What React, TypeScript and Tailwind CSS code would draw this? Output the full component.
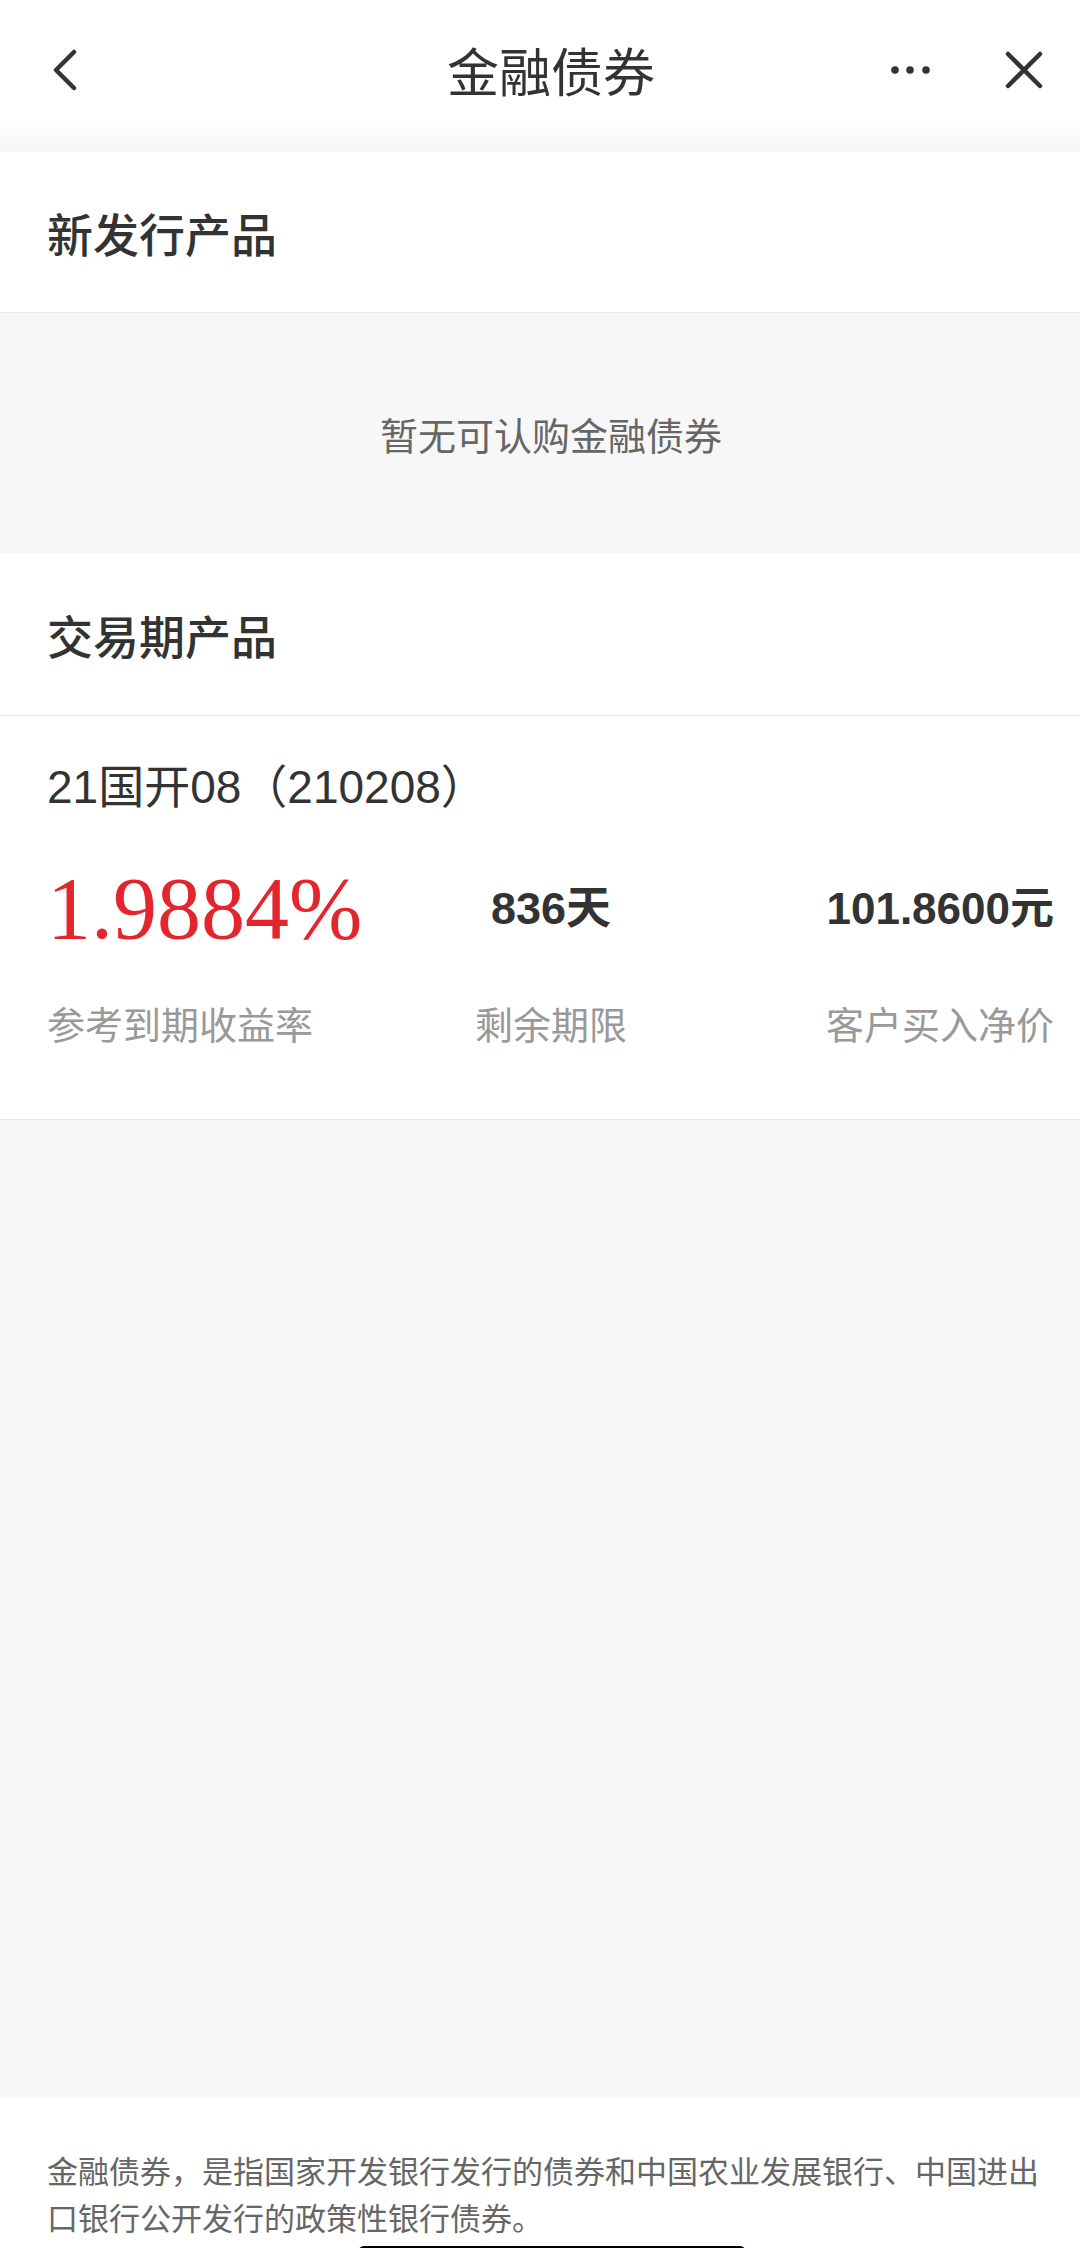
const sans = "font-['Liberation_Sans','Noto_Sans_CJK_SC',sans-serif]";

function Header() {
  return (
    <div className="grid grid-cols-[1fr_auto_1fr] items-center h-[127px] pt-[12px] bg-white">
      <div className="pl-[52px] flex items-center">
        <svg width="26" height="42" viewBox="0 0 26 42" fill="none">
          <path d="M22 3 L4 21 L22 39" stroke="#333" strokeWidth="4.5" strokeLinecap="round" strokeLinejoin="round" />
        </svg>
      </div>
      <div className="pl-[22px] text-[52px] leading-none text-[#333] font-['Noto_Sans_CJK_SC',sans-serif]">
        金融债券
      </div>
      <div className="flex items-center justify-end pr-[36px] gap-[74px]">
        <svg width="40" height="10" viewBox="0 0 40 10">
          <circle cx="5" cy="5" r="3.8" fill="#333" />
          <circle cx="20" cy="5" r="3.8" fill="#333" />
          <circle cx="36" cy="5" r="3.8" fill="#333" />
        </svg>
        <svg width="40" height="40" viewBox="0 0 40 40" fill="none">
          <path d="M4 4 L36 36 M36 4 L4 36" stroke="#333" strokeWidth="4.5" strokeLinecap="round" />
        </svg>
      </div>
    </div>
  );
}

function SectionTitle({ title, h }: { title: string; h: string }) {
  return (
    <div className={`${h} flex items-center pl-[47px] bg-white border-b border-[#e9e9e9]`}>
      <span className="text-[46px] font-medium text-[#333] font-['Noto_Sans_CJK_SC',sans-serif]">{title}</span>
    </div>
  );
}

export default function App() {
  return (
    <div className={`relative w-[1080px] h-[2248px] overflow-hidden bg-[#f7f7f7] ${sans}`}>
      <Header />
      <div className="h-[25px] bg-gradient-to-b from-[#fbfbfb] to-[#f6f6f6]" />

      <SectionTitle title="新发行产品" h="h-[161px]" />
      <div className="h-[240px] flex items-center justify-center pl-[22px] bg-[#f7f7f7]">
        <span className="text-[38px] text-[#666] font-['Noto_Sans_CJK_SC',sans-serif]">暂无可认购金融债券</span>
      </div>

      <SectionTitle title="交易期产品" h="h-[163px]" />

      {/* bond card */}
      <div className="h-[404px] bg-white border-b border-[#e9e9e9] pt-[50px]">
        <div className="pl-[47px] text-[46px] leading-[42px] text-[#333]">21国开08（210208）</div>
        <div className="flex items-center h-[100px] mt-[51px] pl-[47px] pr-[26px]">
          <div className="w-[428px] text-[88px] leading-none text-[#e3262d] font-['Liberation_Serif',serif]">
            1.9884%
          </div>
          <div className="w-[152px] text-center text-[45px] font-semibold text-[#333]">836天</div>
          <div className="flex-1 text-right text-[44px] font-semibold text-[#333]">101.8600元</div>
        </div>
        <div className="flex items-center h-[40px] mt-[43px] pl-[47px] pr-[26px] text-[38px] text-[#999] font-['Noto_Sans_CJK_SC',sans-serif]">
          <div className="w-[428px]">参考到期收益率</div>
          <div className="w-[152px] text-center">剩余期限</div>
          <div className="flex-1 text-right">客户买入净价</div>
        </div>
      </div>

      <div className="h-[978px] bg-[#f7f7f7]" />

      <div className="h-[150px] bg-white pt-[48px] pl-[47px]">
        <p className="text-[31px] leading-[47px] text-[#666] whitespace-nowrap font-['Noto_Sans_CJK_SC',sans-serif]">
          金融债券，是指国家开发银行发行的债券和中国农业发展银行、中国进出
          <br />
          口银行公开发行的政策性银行债券。
        </p>
      </div>

      <div className="absolute left-[358px] top-[2246px] w-[388px] h-[12px] rounded-full bg-black" />
    </div>
  );
}
